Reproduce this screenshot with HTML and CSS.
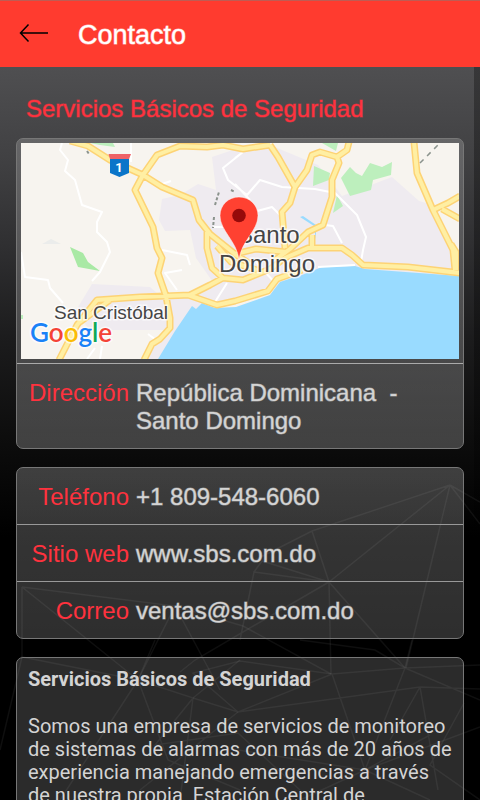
FILE: index.html
```html
<!DOCTYPE html>
<html lang="es">
<head>
<meta charset="utf-8">
<meta name="viewport" content="width=device-width, initial-scale=1">
<title>Contacto</title>
<link rel="stylesheet" href="styles.css">
</head>
<body>
<header class="topbar">
  <button class="back" type="button" aria-label="Volver">
    <svg width="30" height="20" viewBox="0 0 30 20" fill="none" stroke="#000" stroke-width="1.5"><path d="M29 10H2M9.500 1.500L1.500 10L9.500 18.500"/></svg>
  </button>
  <h1>Contacto</h1>
</header>
<main class="content">
  <svg class="mesh" viewBox="0 67 480 733" preserveAspectRatio="xMidYMin slice" fill="none" stroke="#fff" stroke-width="1.500" aria-hidden="true">
    <g stroke-opacity=".06">
      <path d="M450 485L312 531L255 560M450 485L329 582M450 485L406 668M450 485L480 524M450 485L480 502M312 531L329 582M329 582L254 572L240 640M329 582L262 561L254 572M329 582L195 660L180 672M329 582L331 674M329 582L405 668"/>
      <path d="M22 587L175 606L138 680M22 587L22 657M22 587L138 680M175 606L220 690M243 626L331 674M243 626L175 606"/>
      <path d="M332 674L240 661L193 673L238 712L332 674L405 668M332 674L365 770L430 735M405 668L375 650L300 640M405 668L480 665M405 668L365 770M405 668L480 700M405 668L412 640M420 687L238 712L193 698M420 687L480 689M420 687L390 740M420 687L438 790M365 770L430 800M464 703L430 765L480 800"/>
      <path d="M138 680L22 657L0 750M138 680L60 800M138 680L168 760L240 790M138 680L193 698L240 660M193 698L155 745L238 733L300 790M138 680L155 640M193 698L180 800M238 712L140 790M365 770L238 750M365 770L300 800M365 770L480 727"/>
    </g>
  </svg>
  <h2>Servicios Básicos de Seguridad</h2>

  <section class="card place">
    <div class="map">
      <svg viewBox="21 143 438 216" role="img" aria-label="Mapa de Santo Domingo">
        <rect x="21" y="143" width="438" height="216" fill="#f7f4ef"/>
        <path fill="#efebf0" d="M212 157L245 146L270 145L318 165L342 196L392 177L419 201L433 205L455 260V280L280 290L200 306L158 359L140 359L165 330L90 330L75 312L92 284L150 287L165 300L215 285L196 258L190 230L165 231L159 220L162 199L180 195L198 184L216 190Z"/>
        <g fill="#bdefbd">
          <path d="M90 143H113L115 147L100 145Z"/>
          <path d="M70 247L83 253L88 262L100 271L78 267Z" fill="#a9e9a5"/>
          <path d="M322 143H338L336 151Z"/>
          <path d="M314 166L330 173L329 180L313 186Z"/>
          <path d="M341 178L350 167L356 173L362 176L370 163L382 167L392 162L391 175L373 180L371 190L350 196Z"/>
          <path d="M337 195L343 206L333 213Z"/>
          <path d="M21 315L23 315V319H21Z"/>
        </g>
        <path d="M158 359L175 331L192 306L196 309L202 303L215 308L236 307L270 295L280 282L295 277L302 275L322 267L355 266L365 269L459 276V359Z" fill="#99dbff"/>
        <path d="M300 217L303 216L316 225V240L314 226Z" fill="#99dbff"/>
        <path d="M42 244L51 239L61 244Z" fill="#ebeceb"/>
        <path fill="none" stroke="#fff" stroke-width="2" stroke-linejoin="round" d="M62 143L60 150L68 160L65 171L75 180L82 205L102 212L97 222L97 232L107 242L110 252L100 272L92 281M21 252L25 277L48 280L50 288L63 303M131 143V162M243 152L223 168L228 180L247 195L260 180L282 187L315 189L335 193L357 215L366 237L363 250L361 262M325 225L333 226L342 243M250 213L272 207L280 215M235 158L243 152M213 227H225M162 250L187 255L190 265M182 270L165 273L177 290M227 283L215 302M102 346L100 359M95 348L87 359M256 262L276 284M318 267L355 265M235 184L250 200M162 184L171 181M148 334L156 340"/>
        <g fill="none" stroke-linejoin="round">
          <path stroke="#fdd375" stroke-width="7" d="M70 141L88 146L110 160L143 175L162 187L193 200L199 220L210 234L235 254L250 264M460 219L442 209M270 145L243 149L223 145L207 147L180 146L157 155L143 175L135 190L153 227L157 248L162 258L158 273L166 296L170 318L170 328L160 339L152 344L144 360M270 145L278 157L295 187L290 203L282 212L285 248M295 187L307 170L312 155L320 152L337 157L347 150L349 142M337 157L339 163L332 180L332 197L323 225L308 232L290 249L275 260M414 142L417 173L433 210L453 250L455 270M451 244L456 252V270M433 210L448 203L460 196M59 360L77 325L97 300L140 297L190 295L210 285L223 278L243 280L270 269L285 258L308 248L342 248L352 255L363 265L408 267L460 273M188 295L217 305L235 301L268 291L277 279L302 270M207 232L207 248L212 268L223 278M217 246L231 262L257 270M235 254L256 249L286 252M312 235V248M80 322L110 300"/>
          <path stroke="#ffefa3" stroke-width="4" d="M70 141L88 146L110 160L143 175L162 187L193 200L199 220L210 234L235 254L250 264M460 219L442 209M270 145L243 149L223 145L207 147L180 146L157 155L143 175L135 190L153 227L157 248L162 258L158 273L166 296L170 318L170 328L160 339L152 344L144 360M270 145L278 157L295 187L290 203L282 212L285 248M295 187L307 170L312 155L320 152L337 157L347 150L349 142M337 157L339 163L332 180L332 197L323 225L308 232L290 249L275 260M414 142L417 173L433 210L453 250L455 270M451 244L456 252V270M433 210L448 203L460 196M59 360L77 325L97 300L140 297L190 295L210 285L223 278L243 280L270 269L285 258L308 248L342 248L352 255L363 265L408 267L460 273M188 295L217 305L235 301L268 291L277 279L302 270M207 232L207 248L212 268L223 278M217 246L231 262L257 270M235 254L256 249L286 252M312 235V248M80 322L110 300"/>
        </g>
        <g stroke="#8b938d" fill="none">
          <path d="M420 163L439 144" stroke-width="1.500" stroke-dasharray="5 5"/>
          <path d="M87 151L89 154M215 205L219 192M214 217L213 228M231 190L235 192" stroke-width="2" stroke-dasharray="3 2"/>
        </g>
        <path d="M110 159H129V173L119.500 177L110 173Z" fill="#0b75c9"/>
        <path d="M108.500 154H131L129 159H110Z" fill="#ef6266"/>
        <text class="shield" x="119" y="172" text-anchor="middle">1</text>
        <text class="city" x="237" y="243">Santo</text>
        <text class="city" x="219" y="272">Domingo</text>
        <text class="town" x="54" y="319">San Cristóbal</text>
        <text class="brand" x="30" y="342"><tspan fill="#1a82f7">G</tspan><tspan fill="#f44336">o</tspan><tspan fill="#fbbc05">o</tspan><tspan fill="#1a82f7">g</tspan><tspan fill="#0fa958">l</tspan><tspan fill="#f44336">e</tspan></text>
        <path d="M239 260C237 241 220 231 220 215.500C220 205 228.500 197 239 197S258 205 258 215.500C258 231 241 241 239 260Z" fill="#ff4131" stroke="#fff" stroke-opacity=".5"/>
        <circle cx="239" cy="215.500" r="6.800" fill="#960a0a"/>
      </svg>
    </div>
    <dl class="rows">
      <div class="row"><dt>Dirección</dt><dd>República Dominicana&nbsp; - Santo Domingo</dd></div>
    </dl>
  </section>

  <section class="card">
    <dl class="rows">
      <div class="row"><dt>Teléfono</dt><dd><a href="tel:+18095486060">+1 809-548-6060</a></dd></div>
      <div class="row"><dt>Sitio web</dt><dd><a href="http://www.sbs.com.do">www.sbs.com.do</a></dd></div>
      <div class="row"><dt>Correo</dt><dd><a href="mailto:ventas@sbs.com.do">ventas@sbs.com.do</a></dd></div>
    </dl>
  </section>

  <section class="card about">
    <h3>Servicios Básicos de Seguridad</h3>
    <p>Somos una empresa de servicios de monitoreo de sistemas de alarmas con más de 20 años de experiencia manejando emergencias a través de nuestra propia&nbsp; Estación Central de</p>
  </section>
</main>
</body>
</html>
```
FILE: styles.css
```css
* {
  box-sizing: border-box;
}

body {
  margin: 0;
  height: 100vh;
  display: flex;
  flex-direction: column;
  overflow: hidden;
  background: #000;
  color: #d4d4d4;
  font-family: "Liberation Sans", Arial, sans-serif;
  font-size: 24px;
  line-height: 28px;
}

h1, h2, h3, p, dl, dd {
  margin: 0;
}

.topbar {
  flex: none;
  display: flex;
  align-items: center;
  gap: 29px;
  height: 67px;
  padding: 2px 19px 0;
  background: #ff3b2f;
  border-top: 1px solid #bf5c54;
}

.back {
  display: flex;
  padding: 0 0 4px;
  border: 0;
  background: none;
}

h1 {
  color: #fff;
  font-size: 27px;
  font-weight: 400;
  -webkit-text-stroke: 1px rgba(255, 255, 255, 0.6);
}

.content {
  position: relative;
  z-index: 0;
  flex: 1;
  display: flex;
  flex-direction: column;
  gap: 18px;
  padding: 28px 16px;
  overflow-y: auto;
  scrollbar-width: none;
  background:
    linear-gradient(to left, rgba(0, 0, 0, 0.3) 6px, transparent 6px),
    linear-gradient(#4f4f51 0, #414143 90px, #2f2f31 180px, #1c1c1d 270px, #0d0d0d 370px, #000 470px);
}

.mesh {
  position: absolute;
  z-index: -1;
  top: 0;
  left: 0;
  width: 100%;
}

h2 {
  margin: 0 10px -3px;
  color: #ff323e;
  font-size: 24px;
  font-weight: 400;
  -webkit-text-stroke: 1px rgba(255, 50, 62, 0.5);
}

.card {
  flex: none;
  border: 1px solid #777;
  border-radius: 7px;
  background: linear-gradient(rgba(255, 255, 255, 0.22), rgba(255, 255, 255, 0.18));
}

.place {
  background: linear-gradient(rgba(255, 255, 255, 0.18), rgba(255, 255, 255, 0.22));
}

.map {
  padding: 4px;
  border-bottom: 1px solid #aaa;
}

.map svg {
  display: block;
  width: 100%;
}

.city, .town, .brand {
  paint-order: stroke;
  stroke: #fff;
  stroke-opacity: 0.7;
  stroke-width: 3px;
  fill: #454545;
}

.city {
  font-size: 24px;
}

.town {
  font-size: 19px;
}

.brand {
  font-family: Lato, sans-serif;
  font-size: 26px;
  font-weight: 600;
}

.shield {
  fill: #fff;
  font-family: Roboto, sans-serif;
  font-size: 13px;
  font-weight: 700;
}

.row {
  display: grid;
  grid-template-columns: 112px 1fr;
  gap: 7px;
  padding: 15px 12px 13px 0;
}

.row + .row {
  border-top: 1px solid #999;
}

dt {
  color: #ff323e;
  text-align: right;
}

dd {
  -webkit-text-stroke: 1px rgba(212, 212, 212, 0.5);
}

dd a {
  color: inherit;
  text-decoration: none;
}

.about {
  padding: 10px 11px;
  background: rgba(255, 255, 255, 0.17);
  font-family: Roboto, sans-serif;
  font-size: 20px;
  line-height: 23px;
}

.about h3 {
  margin-bottom: 24px;
  font-size: 20px;
  font-weight: 700;
}
```
